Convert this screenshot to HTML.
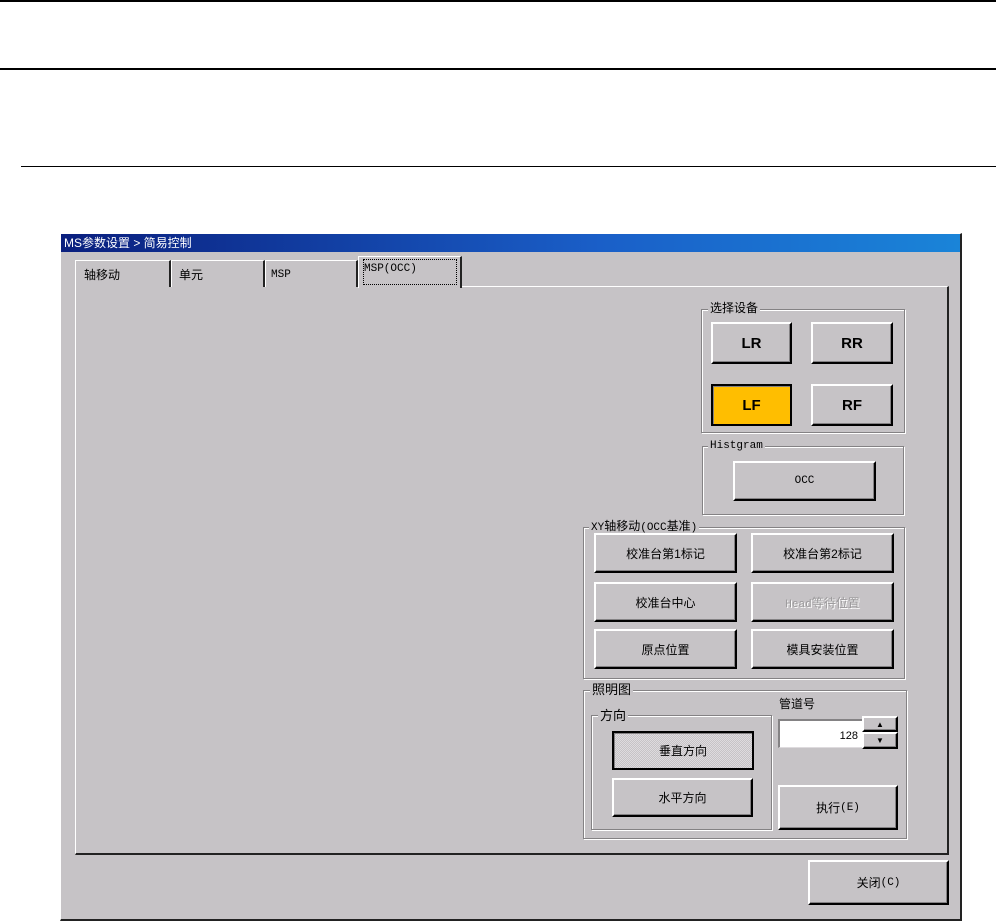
<!DOCTYPE html>
<html><head><meta charset="utf-8"><style>
*{margin:0;padding:0;box-sizing:border-box}
body{width:996px;height:921px;background:#fff;position:relative;overflow:hidden;font-family:"Liberation Sans","Noto Sans CJK SC",sans-serif;font-size:12px;color:#000}
.a{position:absolute}
.btn{position:absolute;background:#c6c3c6;border-top:2px solid #fff;border-left:2px solid #fff;border-right:2px solid #000;border-bottom:2px solid #000;box-shadow:inset -1px -1px 0 #848284;display:flex;align-items:center;justify-content:center;font-size:12px}
.big{font-size:15px;font-weight:bold;font-family:"Liberation Sans",sans-serif}
.grp{position:absolute;border:1px solid #848284;box-shadow:1px 1px 0 #fff, inset 1px 1px 0 #fff}
.gt{position:absolute;background:#c6c3c6;padding:0 2px;font-size:12px;line-height:13px}
.mono{font-family:"Liberation Mono","Noto Sans CJK SC",monospace;font-size:11px}
</style></head><body>
<div class="a" style="left:0;top:0;width:996px;height:2px;background:#000"></div>
<div class="a" style="left:0;top:68px;width:996px;height:2px;background:#000"></div>
<div class="a" style="left:21px;top:166px;width:975px;height:1px;background:#000"></div>

<div class="a" style="left:60px;top:233px;width:902px;height:688px;background:#c6c3c6;border-left:1px solid #fff;border-top:1px solid #fff;border-right:2px solid #222;border-bottom:2px solid #222"></div>
<div class="a" style="left:61px;top:234px;width:899px;height:18px;background:linear-gradient(90deg,#0a1f7e,#1a5fc8 60%,#1a84d8);color:#fff;font-size:12px;line-height:18px;padding-left:3px">MS参数设置 &gt; 简易控制</div>

<div class="a" style="left:75px;top:286px;width:874px;height:569px;border-left:1px solid #fff;border-top:1px solid #fff;border-right:2px solid #222;border-bottom:2px solid #222"></div>
<div class="a" style="left:75px;top:260px;width:96px;height:27px;border-left:1px solid #fff;border-top:1px solid #fff;border-right:2px solid #222;background:#c6c3c6;padding:5px 0 0 8px;font-size:12px">轴移动</div>
<div class="a" style="left:171px;top:260px;width:94px;height:27px;border-left:1px solid #fff;border-top:1px solid #fff;border-right:2px solid #222;background:#c6c3c6;padding:5px 0 0 7px;font-size:12px">单元</div>
<div class="a mono" style="left:265px;top:260px;width:93px;height:27px;border-left:1px solid #fff;border-top:1px solid #fff;border-right:2px solid #222;background:#c6c3c6;padding:8px 0 0 5px">MSP</div>
<div class="a mono" style="left:358px;top:256px;width:104px;height:32px;border-left:1px solid #fff;border-top:1px solid #fff;border-right:2px solid #222;background:#c6c3c6;padding:3px 0 0 5px"><span style="outline:1px dotted #000;display:inline-block;width:92px;height:24px;padding:2px 0 0 0;line-height:14px">MSP(OCC)</span></div>

<div class="grp" style="left:701px;top:309px;width:204px;height:124px"></div>
<div class="gt" style="left:708px;top:302px">选择设备</div>
<div class="btn big" style="left:711px;top:322px;width:81px;height:42px">LR</div>
<div class="btn big" style="left:811px;top:322px;width:82px;height:42px">RR</div>
<div class="btn big" style="left:711px;top:384px;width:81px;height:42px;background:#ffbe00;border-top-color:#000;border-left-color:#000;box-shadow:inset 1px 1px 0 #848284">LF</div>
<div class="btn big" style="left:811px;top:384px;width:82px;height:42px">RF</div>

<div class="grp" style="left:702px;top:446px;width:202px;height:69px"></div>
<div class="gt mono" style="left:708px;top:440px">Histgram</div>
<div class="btn mono" style="left:733px;top:461px;width:143px;height:40px">OCC</div>

<div class="grp" style="left:583px;top:527px;width:322px;height:152px"></div>
<div class="gt" style="left:589px;top:520px"><span class="mono">XY</span>轴移动<span class="mono">(OCC</span>基准<span class="mono">)</span></div>
<div class="btn" style="left:594px;top:533px;width:143px;height:40px">校准台第1标记</div>
<div class="btn" style="left:751px;top:533px;width:143px;height:40px">校准台第2标记</div>
<div class="btn" style="left:594px;top:582px;width:143px;height:40px">校准台中心</div>
<div class="btn" style="left:751px;top:582px;width:143px;height:40px"><span style="color:#9a989a;text-shadow:1px 1px 0 #fff"><span class="mono">Head</span>等待位置</span></div>
<div class="btn" style="left:594px;top:629px;width:143px;height:40px">原点位置</div>
<div class="btn" style="left:751px;top:629px;width:143px;height:40px">模具安装位置</div>

<div class="grp" style="left:583px;top:690px;width:324px;height:149px"></div>
<div class="gt" style="left:590px;top:683px;font-size:13px">照明图</div>
<div class="grp" style="left:591px;top:715px;width:181px;height:115px"></div>
<div class="gt" style="left:598px;top:709px;font-size:13px">方向</div>
<div class="btn" style="left:612px;top:731px;width:142px;height:39px;border-top-color:#000;border-left-color:#000;background:repeating-conic-gradient(#dedbde 0 25%,#c6c3c6 0 50%) 0 0/2px 2px;box-shadow:inset 1px 1px 0 #848284">垂直方向</div>
<div class="btn" style="left:612px;top:778px;width:141px;height:39px">水平方向</div>
<div class="a" style="left:779px;top:695px;font-size:12px">管道号</div>
<div class="a" style="left:778px;top:719px;width:84px;height:29px;background:#fff;border-top:2px solid #848284;border-left:2px solid #848284;border-bottom:1px solid #dedbde;text-align:right;padding:9px 4px 0 0;font-size:11px">128</div>
<div class="btn" style="left:862px;top:716px;width:36px;height:16px;font-size:8px">▲</div>
<div class="btn" style="left:862px;top:732px;width:36px;height:17px;font-size:8px">▼</div>
<div class="btn" style="left:778px;top:785px;width:120px;height:45px">执行<span class="mono">(E)</span></div>

<div class="btn" style="left:808px;top:860px;width:141px;height:45px">关闭<span class="mono">(C)</span></div>
</body></html>
